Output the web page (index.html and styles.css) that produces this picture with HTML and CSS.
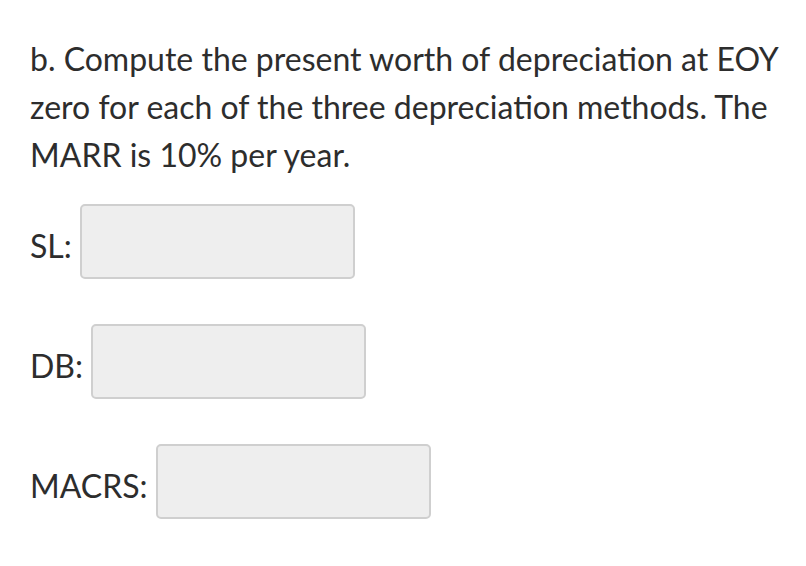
FILE: index.html
```html
<!DOCTYPE html>
<html>
<head>
<meta charset="utf-8">
<link rel="stylesheet" href="styles.css">
</head>
<body>
<div class="question">
  <p class="prompt">b. Compute the present worth of depreciation at EOY zero for each of the three depreciation methods. The MARR is 10% per year.</p>
  <div class="answers">
    <div class="row"><span class="label">SL:</span><input class="box" type="text"></div>
    <div class="row"><span class="label">DB:</span><input class="box" type="text"></div>
    <div class="row"><span class="label">MACRS:</span><input class="box" type="text"></div>
  </div>
</div>
</body>
</html>
```
FILE: styles.css
```css
html, body {
  margin: 0;
  padding: 0;
  background: #ffffff;
}
body {
  font-family: Lato, "Liberation Sans", sans-serif;
  color: #2d2d2d;
}
.question {
  padding: 35px 10px 0 30px;
}
.prompt {
  margin: 0;
  font-size: 32px;
  line-height: 48px;
  width: 760px;
}
.answers {
  display: flex;
  flex-direction: column;
  gap: 45px;
  margin-top: 25px;
}
.row {
  display: flex;
  align-items: flex-start;
  gap: 8px;
}
.label {
  font-size: 32px;
  line-height: 67px;
  padding-top: 8px;
}
.box {
  width: 271px;
  height: 71px;
  box-sizing: content-box;
  padding: 0;
  margin: 0;
  border: 2px solid #cfcfcf;
  border-radius: 5px;
  background: #eeeeee;
  outline: none;
}
```
